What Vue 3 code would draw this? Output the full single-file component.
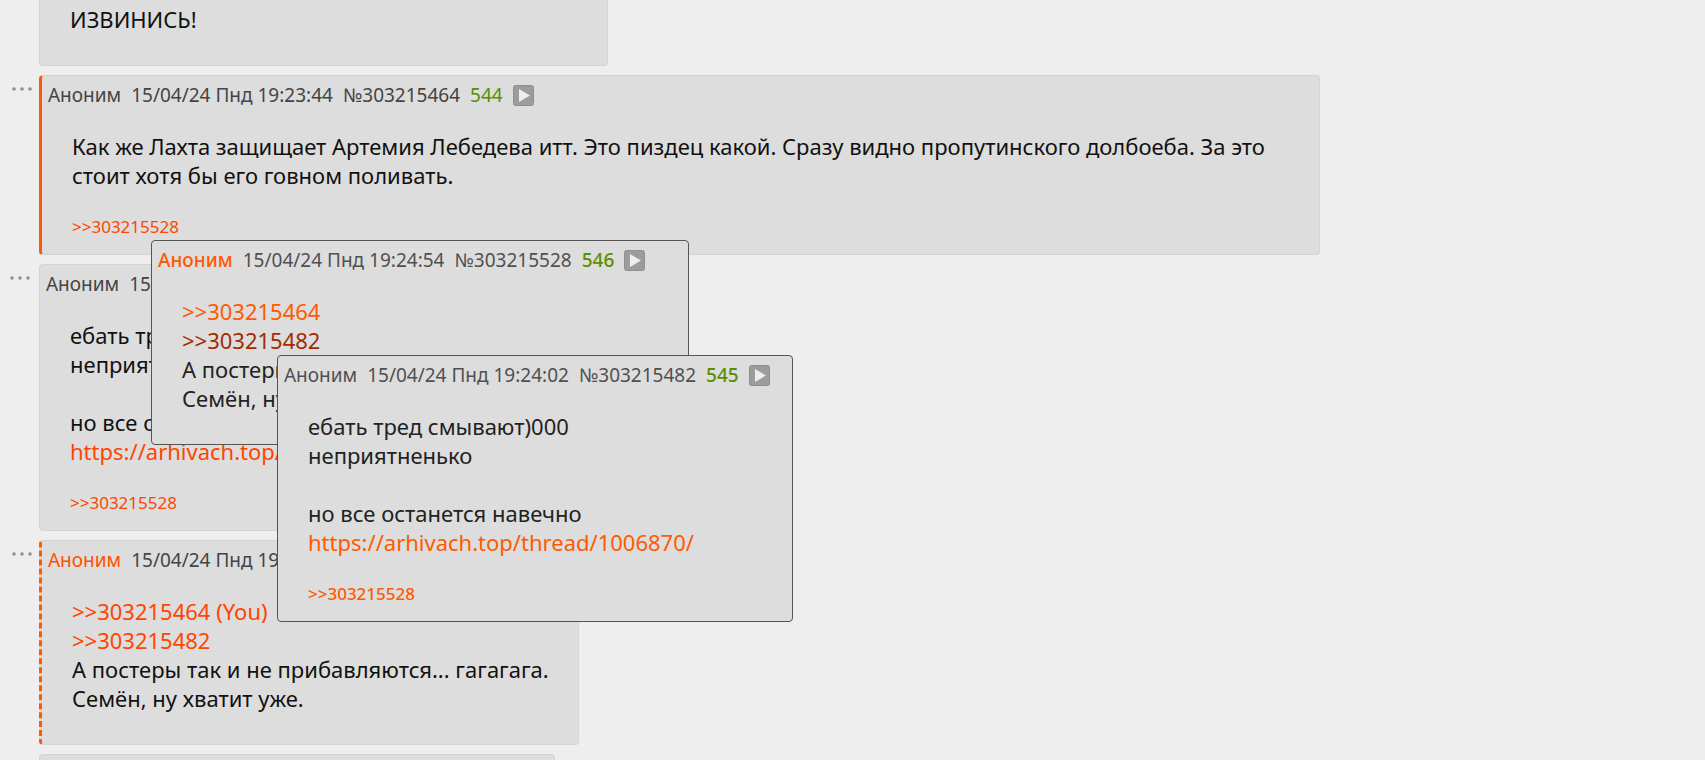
<script setup>
import { ref } from 'vue';

const posts = ref([
  {
    id: 303215401,
    kind: 'cut',
    lines: [{ text: 'ИЗВИНИСЬ!' }],
    replies: []
  },
  {
    id: 303215464,
    kind: 'own',
    date: '15/04/24 Пнд 19:23:44',
    number: 544,
    lines: [
      { text: 'Как же Лахта защищает Артемия Лебедева итт. Это пиздец какой. Сразу видно пропутинского долбоеба. За это стоит хотя бы его говном поливать.' }
    ],
    replies: [303215528]
  },
  {
    id: 303215482,
    kind: 'plain',
    date: '15/04/24 Пнд 19:24:02',
    number: 545,
    lines: [
      { text: 'ебать тред смывают)000' },
      { text: 'неприятненько' },
      { text: '' },
      { text: 'но все останется навечно' },
      { text: 'https://arhivach.top/thread/1006870/', link: true }
    ],
    replies: [303215528]
  },
  {
    id: 303215528,
    kind: 'answer',
    accent: true,
    date: '15/04/24 Пнд 19:24:54',
    number: 546,
    lines: [
      { text: '>>303215464 (You)', link: true },
      { text: '>>303215482', link: true },
      { text: 'А постеры так и не прибавляются... гагагага.' },
      { text: 'Семён, ну хватит уже.' }
    ],
    replies: []
  },
  { id: 303215570, kind: 'next', lines: [], replies: [] },
  // previews opened by hovering reply links
  {
    id: 303215528,
    kind: 'preview first',
    accent: true,
    date: '15/04/24 Пнд 19:24:54',
    number: 546,
    lines: [
      { text: '>>303215464', link: true },
      { text: '>>303215482', link: true, hovered: true },
      { text: 'А постеры так и не прибавляются... гагагага.' },
      { text: 'Семён, ну хватит уже.' }
    ],
    replies: []
  },
  {
    id: 303215482,
    kind: 'preview second',
    date: '15/04/24 Пнд 19:24:02',
    number: 545,
    lines: [
      { text: 'ебать тред смывают)000' },
      { text: 'неприятненько' },
      { text: '' },
      { text: 'но все останется навечно' },
      { text: 'https://arhivach.top/thread/1006870/', link: true }
    ],
    replies: [303215528]
  }
]);

const isPreview = (post) => post.kind.startsWith('preview');
const hrefFor = (text) => (text.startsWith('http') ? text : `#${text.slice(2, 11)}`);
</script>

<template>
  <main class="thread">
    <div v-for="(post, index) in posts" :key="index" class="row" :class="post.kind">
      <button v-if="post.date && !isPreview(post)" class="menu" type="button" aria-label="Меню поста">
        <svg width="20" height="4" viewBox="0 0 20 4">
          <circle cx="2" cy="2" r="1.800" />
          <circle cx="10" cy="2" r="1.800" />
          <circle cx="18" cy="2" r="1.800" />
        </svg>
      </button>
      <article class="post">
        <header v-if="post.date" class="details">
          <span class="name" :class="{ accent: post.accent }">Аноним</span>
          <time>{{ post.date }}</time>
          <a class="id" :href="`#${post.id}`">№{{ post.id }}</a>
          <span class="number">{{ post.number }}</span>
          <button class="hide" type="button" aria-label="Скрыть">
            <svg width="21" height="21" viewBox="0 0 21 21">
              <rect x="0.5" y="0.5" width="20" height="20" rx="2" />
              <path d="M6 4v13l11-6.500z" />
            </svg>
          </button>
        </header>
        <div class="message">
          <div v-for="(line, i) in post.lines" :key="i" class="line">
            <a v-if="line.link" :href="hrefFor(line.text)" :class="{ hovered: line.hovered }">{{ line.text }}</a>
            <template v-else>{{ line.text }}</template>
          </div>
        </div>
        <div v-if="post.replies.length" class="replies">
          <a v-for="reply in post.replies" :key="reply" :href="`#${reply}`">>>{{ reply }}</a>
        </div>
      </article>
    </div>
  </main>
</template>

<style>
body {
    background: #eee;
}
</style>

<style scoped>
.thread {
    position: relative;
    box-sizing: border-box;
    height: 100vh;
    overflow: hidden;
    padding-right: 16px;
    font-family: 'Trebuchet MS', 'Noto Sans', 'Open Sans', sans-serif;
    font-size: 22px;
    line-height: 29px;
    color: #111;
}

.row {
    display: grid;
    grid-template-columns: 39px minmax(0, 1281px);
    margin-bottom: 9px;
}

.post {
    grid-column: 2;
    justify-self: start;
    box-sizing: border-box;
    min-width: 516px;
    padding: 5px 20px 31px 6px;
    background: #ddd;
    border: 1px solid #d3d3d3;
    border-radius: 4px;
}

.post:has(.replies) {
    padding-bottom: 16px;
}

.cut .post {
    min-width: 569px;
    padding-top: 5px;
    border-top: 0;
    border-radius: 0 0 4px 4px;
}

.cut .message {
    margin-top: 0;
}

.own .post {
    border-left: 3px solid #ff5a00;
}

.answer .post {
    min-width: 540px;
    border-left: 3px dashed #ff5a00;
}

.menu {
    grid-column: 1;
    align-self: start;
    justify-self: start;
    display: flex;
    margin: 12px 0 0 10px;
    padding: 0;
    border: 0;
    background: none;
    cursor: pointer;
    fill: #8c9196;
}

.own .menu,
.answer .menu {
    margin-left: 12px;
}

.details {
    display: flex;
    align-items: center;
    gap: 10px;
    font-size: 19px;
    color: #444;
}

.number {
    color: #5a9000;
}

.name.accent {
    color: #ff5000;
}

.hide {
    display: flex;
    padding: 0;
    border: 0;
    background: none;
    cursor: pointer;
}

.hide rect {
    fill: #9c9c9c;
    stroke: #8f8f8f;
}

.hide path {
    fill: #eee;
}

.message {
    margin: 22px 0 0 24px;
}

.line {
    min-height: 29px;
}

a {
    color: #ff4500;
    text-decoration: none;
}

.details .id {
    color: inherit;
}

.replies {
    margin: 26px 0 0 24px;
    font-size: 17px;
    line-height: 22px;
}

/* previews lie over the thread */
.preview {
    position: absolute;
    display: block;
    margin: 0;
}

.preview .post {
    border-color: #555;
    color: #222;
}

.preview .details {
    color: #505050;
}

.preview .number,
.preview .accent,
.preview .replies {
    font-weight: 500;
}

.preview a,
.preview .accent {
    color: #ff5a00;
}

.preview a.hovered {
    color: #a52a00;
}

.first {
    top: 240px;
    left: 151px;
}

.first .post {
    min-width: 538px;
}

.second {
    top: 355px;
    left: 277px;
}
</style>
